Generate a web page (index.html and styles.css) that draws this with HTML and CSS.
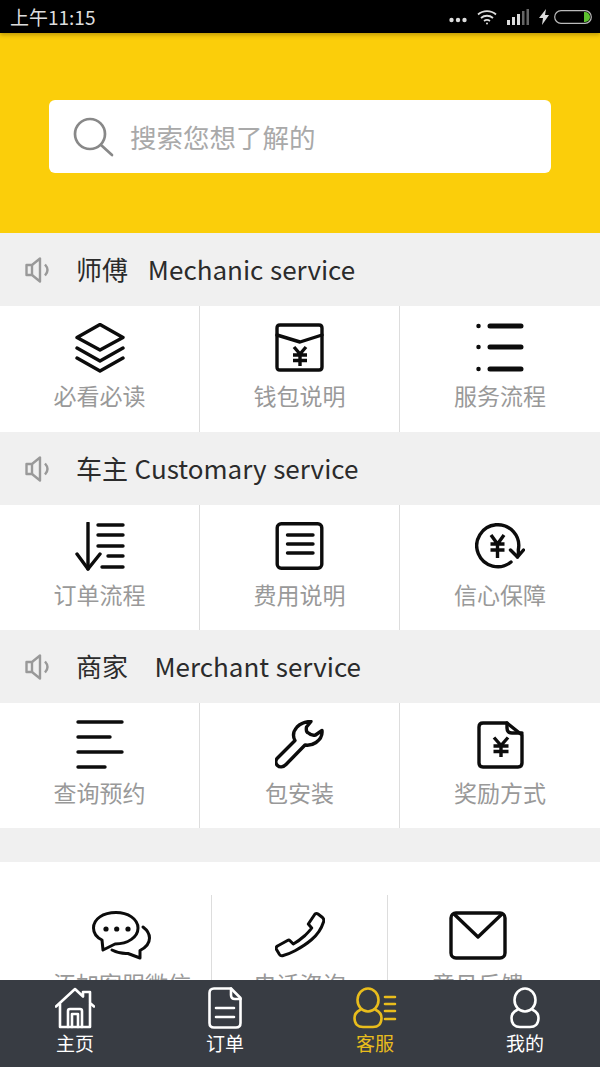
FILE: index.html
```html
<!DOCTYPE html>
<html lang="zh-CN">
<head>
  <meta charset="UTF-8">
  <meta name="viewport" content="width=device-width, initial-scale=1.0">
  <title>客服</title>
  <link rel="stylesheet" href="styles.css">
</head>
<body>

<div class="status-bar">
  <span class="status-time">上午11:15</span>
  <div class="status-icons">
    <svg class="st-dots" width="18" height="6" viewBox="0 0 18 6"><circle cx="2.5" cy="3" r="2.2"/><circle cx="9" cy="3" r="2.2"/><circle cx="15.5" cy="3" r="2.2"/></svg>
    <svg class="st-wifi" width="20" height="16" viewBox="0 0 20 16" fill="none" stroke="#ddd" stroke-width="1.8"><path d="M1 5.5 C6 1 14 1 19 5.5"/><path d="M4 9 C7.5 6 12.5 6 16 9"/><path d="M7 12 C8.7 10.8 11.3 10.8 13 12"/><circle cx="10" cy="14.5" r="1" fill="#ddd" stroke="none"/></svg>
    <svg class="st-signal" width="22" height="16" viewBox="0 0 22 16"><rect x="0" y="11" width="3" height="5" fill="#ddd"/><rect x="5" y="8" width="3" height="8" fill="#ddd"/><rect x="10" y="5" width="3" height="11" fill="#ddd"/><rect x="15" y="2" width="2.5" height="14" fill="#666"/><rect x="19.5" y="0" width="2.5" height="16" fill="#666"/></svg>
    <svg class="st-bolt" width="10" height="16" viewBox="0 0 10 16"><path d="M7 0 L0 9 H4 L3 16 L10 6 H6 Z" fill="#ddd"/></svg>
    <svg class="st-battery" width="38" height="14" viewBox="0 0 38 14"><rect x="0.7" y="0.7" width="36.6" height="12.6" rx="6.3" fill="none" stroke="#bbb" stroke-width="1.2"/><path d="M30 2 H31 A5 5 0 0 1 31 12 H30 Z" fill="#5cc12e"/></svg>
  </div>
</div>

<div class="search-band">
  <div class="search-box">
    <svg class="search-icon" width="42" height="40" viewBox="0 0 42 40" fill="none" stroke="#888" stroke-width="2.7">
      <circle cx="17" cy="17" r="15"/>
      <path d="M28 28 L39 38" stroke-linecap="round"/>
    </svg>
    <span class="search-text">搜索您想了解的</span>
  </div>
</div>

<div class="section">
  <div class="section-head">
    <svg class="horn" width="26" height="26" viewBox="0 0 26 26" fill="none" stroke="#999" stroke-width="2.4" stroke-linejoin="round"><path d="M1.5 8 H7 L15 1.5 V24.5 L7 18 H1.5 Z"/><path d="M7 8 V18"/><path d="M20 7.5 Q25 13 20 18.5"/></svg>
    <span class="section-title">师傅   Mechanic service</span>
  </div>
  <div class="cells cells-tall">
    <div class="cell">
      <svg class="icon" width="50" height="50" viewBox="0 0 50 50"><path d="M25 1.5 L48 14.5 L25 27 L2 14.5 Z"/><path d="M2 25 L25 38 L48 25"/><path d="M2 35 L25 48 L48 35"/></svg>
      <span class="cell-label">必看必读</span>
    </div>
    <div class="cell">
      <svg class="icon" width="50" height="50" viewBox="0 0 50 50"><path d="M5 2 H44 Q47 2 47 5 V44 Q47 47 44 47 H5 Q2 47 2 44 V5 Q2 2 5 2 Z"/><path d="M2 12 L25 19 L47 12"/><path class="heavy" d="M19 24 L25 31 L31 24 M18 32 H32 M18 37.5 H32 M25 31 V43"/></svg>
      <span class="cell-label">钱包说明</span>
    </div>
    <div class="cell">
      <svg class="icon icon-heavy" width="50" height="50" viewBox="0 0 50 50"><path d="M15 3 H46 M15 24 H46 M15 46 H46"/><path class="dot" d="M3.5 3 V3.1 M3.5 24 V24.1 M3.5 46 V46.1"/></svg>
      <span class="cell-label">服务流程</span>
    </div>
  </div>
</div>

<div class="section">
  <div class="section-head">
    <svg class="horn" width="26" height="26" viewBox="0 0 26 26" fill="none" stroke="#999" stroke-width="2.4" stroke-linejoin="round"><path d="M1.5 8 H7 L15 1.5 V24.5 L7 18 H1.5 Z"/><path d="M7 8 V18"/><path d="M20 7.5 Q25 13 20 18.5"/></svg>
    <span class="section-title">车主 Customary service</span>
  </div>
  <div class="cells">
    <div class="cell">
      <svg class="icon" width="50" height="50" viewBox="0 0 50 50"><path d="M13 1 V47"/><path d="M2 32 L13 47 L25 32"/><path d="M23 3 H48 M23 13 H48 M23 24 H48 M33 34 H48 M27 45 H48"/></svg>
      <span class="cell-label">订单流程</span>
    </div>
    <div class="cell">
      <svg class="icon" width="50" height="50" viewBox="0 0 50 50"><rect x="2.2" y="1.7" width="44.6" height="44.6" rx="4"/><path d="M12.5 13 H38 M12.5 22 H38 M12.5 31 H38"/></svg>
      <span class="cell-label">费用说明</span>
    </div>
    <div class="cell">
      <svg class="icon" width="50" height="50" viewBox="0 0 50 50"><path d="M36 40 A21 21 0 1 1 43.3 28 Q43.8 31.5 42.5 35"/><path d="M35.5 28 L42.5 35 L48.5 28"/><path class="heavy" d="M16 13 L22.5 22 L29 13 M15.5 22 H29.5 M15.5 28 H29.5 M22.5 22 V36"/></svg>
      <span class="cell-label">信心保障</span>
    </div>
  </div>
</div>

<div class="section">
  <div class="section-head">
    <svg class="horn" width="26" height="26" viewBox="0 0 26 26" fill="none" stroke="#999" stroke-width="2.4" stroke-linejoin="round"><path d="M1.5 8 H7 L15 1.5 V24.5 L7 18 H1.5 Z"/><path d="M7 8 V18"/><path d="M20 7.5 Q25 13 20 18.5"/></svg>
    <span class="section-title">商家    Merchant service</span>
  </div>
  <div class="cells">
    <div class="cell">
      <svg class="icon" width="50" height="50" viewBox="0 0 50 50"><path d="M3 2 H47 M3 17 H35 M3 32 H47 M3 47 H30"/></svg>
      <span class="cell-label">查询预约</span>
    </div>
    <div class="cell">
      <svg class="icon" width="50" height="50" viewBox="0 0 50 50"><path d="M2 38.5 L20 20.5 C17.5 16 18.5 11 22 7 C26 3 31 1.5 36 1.5 L31.5 7 C31 10 32 12.5 33.5 13 C36 15.5 38 15.5 40.5 15 L47 10.5 C47.5 15 45.5 19.5 41 22.5 C37.5 25 33.5 25.5 30 25 L11 44.5 C8 47.5 4.5 47.5 2.5 45.5 C0.5 43.5 0.5 40.5 2 38.5 Z"/></svg>
      <span class="cell-label">包安装</span>
    </div>
    <div class="cell">
      <svg class="icon" width="50" height="50" viewBox="0 0 50 50"><path d="M32 3 H8 Q4 3 4 7 V43 Q4 47 8 47 H43 Q47 47 47 43 V15 Z"/><path d="M32 3 V8 Q32 13 37 13 H47"/><path class="heavy" d="M19 17.5 L26 25.5 L33 17.5 M18.5 26 H33.5 M18.5 31.5 H33.5 M26 25.5 V37"/></svg>
      <span class="cell-label">奖励方式</span>
    </div>
  </div>
</div>

<div class="gap"></div>

<div class="contact">
  <div class="contact-cell">
    <svg class="icon icon-thin" width="60" height="50" viewBox="0 0 60 50"><path d="M10 29 C4 26 1.5 21.5 1.5 17 C1.5 8 11 1.5 24 1.5 C36 1.5 46 8 46 17 C46 26 36 33 23 33 L11 39 Z"/><path d="M51 16 C55 19 57.5 23 57.5 27 C57.5 32 54 36.5 48 39.5 V47 L36 42.5 C30 43 25 41.5 20 39"/><circle class="fill" cx="14" cy="18" r="2.6"/><circle class="fill" cx="24.7" cy="18" r="2.6"/><circle class="fill" cx="36" cy="18" r="2.6"/></svg>
    <span class="cell-label">添加客服微信</span>
  </div>
  <div class="contact-cell">
    <svg class="icon icon-thin" width="50" height="50" viewBox="0 0 50 50"><path d="M33.3 13 L40 3 Q41.5 2 43 3 L47.5 6.5 Q49.5 8.5 48.5 11 C46 19 42 24 36.7 28.5 C31 33.5 25 37 20 39.7 Q14 43 7.5 44.7 Q5.5 45 4.5 43.5 L1.5 38.5 Q0.5 36.5 2.5 35 L12.5 29.5 Q14 28.7 15 29.7 L18.3 33 C22 31 26 28 30 24.5 C33 21.5 35 19.5 36.7 17 Z"/></svg>
    <span class="cell-label">电话咨询</span>
  </div>
  <div class="contact-cell">
    <svg class="icon" width="58" height="50" viewBox="0 0 58 50"><rect x="2" y="2" width="54" height="45" rx="5"/><path d="M5 3 L29 26 L53 3"/></svg>
    <span class="cell-label">意见反馈</span>
  </div>
</div>

<div class="tabbar">
  <div class="tab">
    <svg class="tab-icon" width="40" height="42" viewBox="0 0 40 42"><path d="M1 19.5 L20 2 L28 9.5 V5 H35 V16 L39 19.5"/><path d="M5 17 V40 H35 V17"/><path d="M13 40 V24 Q13 22 15 22 H25 Q27 22 27 24 V40"/><path d="M17 40 V27 H23 V40"/></svg>
    <span class="tab-label">主页</span>
  </div>
  <div class="tab">
    <svg class="tab-icon" width="34" height="42" viewBox="0 0 34 42"><path d="M23 1.5 H6 Q1.5 1.5 1.5 6 V36 Q1.5 40.5 6 40.5 H28 Q32.5 40.5 32.5 36 V11 Z"/><path d="M23 1.5 V8 Q23 12 27 12 H32.5"/><path d="M8 21 H26 M8 30 H26"/></svg>
    <span class="tab-label">订单</span>
  </div>
  <div class="tab tab-active">
    <svg class="tab-icon" width="44" height="42" viewBox="0 0 44 42"><ellipse cx="15" cy="13" rx="10.5" ry="11.5"/><path d="M7 23 C3 25 1.5 28 1.5 31 C1.5 37 5 40 10 40 H20 C25 40 28.5 37 28.5 31 C28.5 28 27 25 23 23"/><path d="M32 10 H42 M32 17 H42 M32 24 H42 M32 32 H42"/></svg>
    <span class="tab-label">客服</span>
  </div>
  <div class="tab">
    <svg class="tab-icon" width="30" height="42" viewBox="0 0 30 42"><ellipse cx="15" cy="13" rx="10.5" ry="11.5"/><path d="M7 23 C3 25 1.5 28 1.5 31 C1.5 37 5 40 10 40 H20 C25 40 28.5 37 28.5 31 C28.5 28 27 25 23 23"/></svg>
    <span class="tab-label">我的</span>
  </div>
</div>

</body>
</html>
```

FILE: styles.css
```css
html, body {
  margin: 0;
  height: 1067px;
  overflow: hidden;
}

body {
  background-color: #ffffff;
  font-family: "Noto Sans CJK SC", "Noto Sans", sans-serif;
}

/* status bar */
.status-bar {
  height: 33px;
  background-color: #000000;
  box-shadow: 0 2px 4px rgba(120, 90, 0, 0.45);
  position: relative;
  display: flex;
  align-items: center;
  justify-content: space-between;
  padding: 0 8px 0 10px;
  color: #dddddd;
}

.status-time {
  font-size: 19px;
  line-height: 33px;
}

.status-icons {
  display: flex;
  align-items: center;
  gap: 10px;
}

.status-icons svg {
  display: block;
}

.st-dots {
  fill: #dddddd;
  margin-top: 6px;
}

.st-bolt {
  margin-right: -5px;
}

/* search */
.search-band {
  height: 133px;
  padding-top: 67px;
  background-color: #fbce0a;
}

.search-box {
  height: 73px;
  margin: 0 49px;
  background-color: #ffffff;
  border-radius: 6px;
  display: flex;
  align-items: center;
  padding-left: 24px;
}

.search-text {
  margin-left: 15px;
  font-size: 26.5px;
  color: #a9a9a9;
}

/* sections */
.section-head {
  height: 73px;
  background-color: #f0f0f0;
  display: flex;
  align-items: center;
  padding-left: 25px;
}

.section-title {
  margin-left: 25px;
  margin-top: -2px;
  font-size: 26px;
  color: #2b2b2b;
  white-space: pre;
  word-spacing: 0.8px;
}

.cells {
  height: 125px;
  display: grid;
  grid-template-columns: repeat(3, 1fr);
  background-color: #ffffff;
}

.cells-tall {
  height: 126px;
}

.cell {
  padding-top: 17px;
  border-right: 1px solid #dddddd;
  display: flex;
  flex-direction: column;
  align-items: center;
}

.cell:last-child {
  border-right: none;
}

.icon {
  display: block;
  fill: none;
  stroke: #0c0c0c;
  stroke-width: 3.4;
  stroke-linecap: round;
  stroke-linejoin: round;
}

.icon .heavy {
  stroke-width: 3.4;
  stroke-linecap: butt;
}

.icon-heavy {
  stroke-width: 5;
}

.icon-heavy .dot {
  stroke-width: 4.5;
}

.icon-thin {
  stroke-width: 3;
}

.icon .fill {
  fill: #0c0c0c;
  stroke: none;
}

.cell-label {
  margin-top: 7px;
  font-size: 23px;
  line-height: 30px;
  color: #999999;
  white-space: nowrap;
}

.gap {
  height: 34px;
  background-color: #f0f0f0;
}

/* contact row, runs under the tab bar */
.contact {
  margin-top: 33px;
  padding-left: 33px;
  height: 160px;
  display: grid;
  grid-template-columns: 179px 176px 180px;
}

.contact-cell {
  padding-top: 16px;
  border-right: 1px solid #dddddd;
  display: flex;
  flex-direction: column;
  align-items: center;
}

.contact-cell:last-child {
  border-right: none;
}

/* tab bar */
.tabbar {
  position: fixed;
  left: 0;
  right: 0;
  bottom: 0;
  height: 87px;
  background-color: #383c43;
  display: grid;
  grid-template-columns: repeat(4, 1fr);
}

.tab {
  padding-top: 7px;
  display: flex;
  flex-direction: column;
  align-items: center;
  color: #ffffff;
}

.tab-icon {
  display: block;
  fill: none;
  stroke: currentColor;
  stroke-width: 2.6;
  stroke-linecap: round;
  stroke-linejoin: round;
}

.tab-active {
  color: #e9bd1c;
}

.tab-label {
  margin-top: 1px;
  font-size: 19px;
  line-height: 26px;
  font-weight: 400;
}
```
